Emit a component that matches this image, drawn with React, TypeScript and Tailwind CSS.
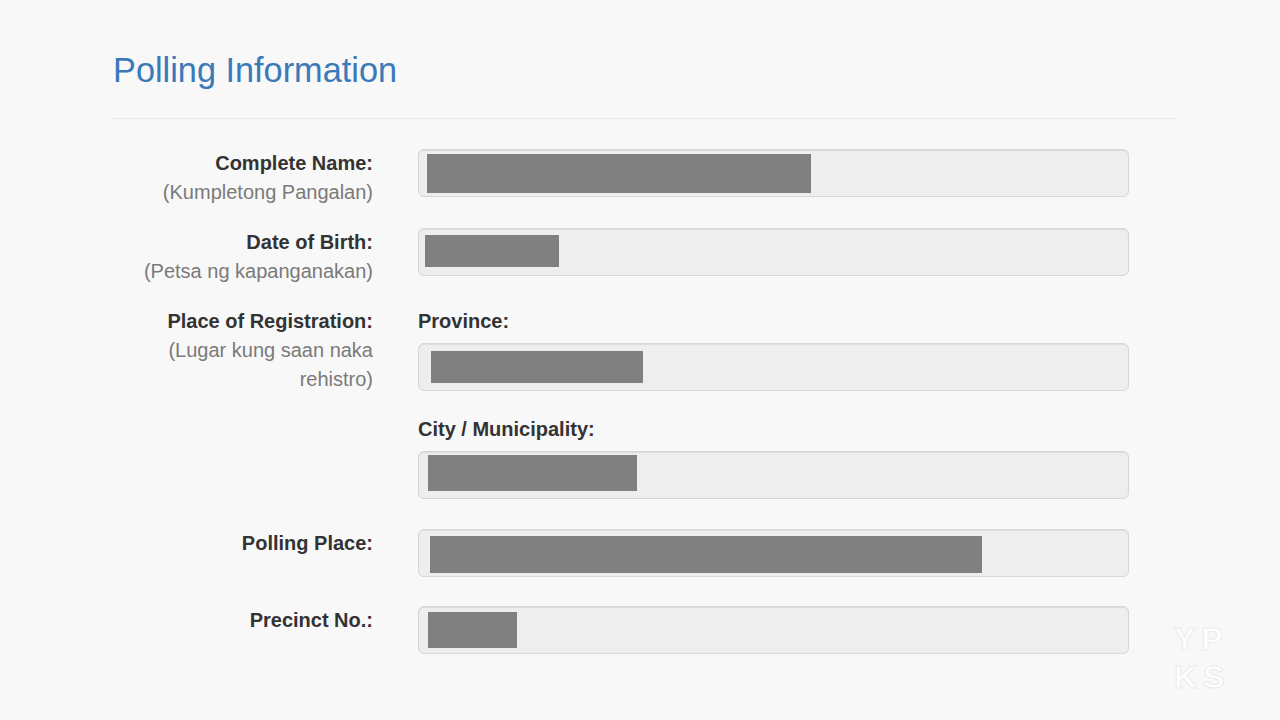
import React from "react";

type Bar = { ml: number; mt: number; w: number; h: number };

function Field({ bar }: { bar: Bar }) {
  return (
    <div className="flex h-[48px] w-[711px] items-start rounded-[6px] border border-[#d6d6d6] bg-[#eeeeee] shadow-[inset_0_1px_1px_rgba(0,0,0,0.075)]">
      <div
        className="bg-[#808080]"
        style={{ marginLeft: bar.ml, marginTop: bar.mt, width: bar.w, height: bar.h }}
      />
    </div>
  );
}

function Label({ title, sub }: { title: string; sub?: string }) {
  return (
    <div className="w-[260px] shrink-0 text-right text-[20px] leading-[29px]">
      <div className="font-bold text-[#333333]">{title}</div>
      {sub && <div className="text-[#7a7a7a]">{sub}</div>}
    </div>
  );
}

export default function App() {
  return (
    <div className="relative h-[720px] w-[1280px] overflow-hidden bg-[#f8f8f8] font-['Liberation_Sans',Arial,sans-serif]">
      <div className="ml-[113px] w-[1062px] pt-[52px]">
        <h3 className="text-[34.3px] leading-[37px] text-[#3a7ab8]">Polling Information</h3>
        <div className="mt-[29px] h-px bg-[#e8e8e8]" />

        <div className="mt-[30px] flex">
          <Label title="Complete Name:" sub="(Kumpletong Pangalan)" />
          <div className="ml-[45px]">
            <Field bar={{ ml: 8, mt: 4, w: 384, h: 39 }} />
          </div>
        </div>

        <div className="mt-[21px] flex">
          <Label title="Date of Birth:" sub="(Petsa ng kapanganakan)" />
          <div className="ml-[45px]">
            <Field bar={{ ml: 6, mt: 6, w: 134, h: 32 }} />
          </div>
        </div>

        <div className="mt-[21px] flex">
          <Label title="Place of Registration:" sub="(Lugar kung saan naka rehistro)" />
          <div className="ml-[45px]">
            <div className="text-[20px] font-bold leading-[29px] text-[#333333]">Province:</div>
            <div className="mt-[7px]">
              <Field bar={{ ml: 12, mt: 7, w: 212, h: 32 }} />
            </div>
            <div className="mt-[24px] text-[20px] font-bold leading-[29px] text-[#333333]">
              City / Municipality:
            </div>
            <div className="mt-[7px]">
              <Field bar={{ ml: 9, mt: 3, w: 209, h: 36 }} />
            </div>
          </div>
        </div>

        <div className="mt-[30px] flex">
          <Label title="Polling Place:" />
          <div className="ml-[45px]">
            <Field bar={{ ml: 11, mt: 6, w: 552, h: 37 }} />
          </div>
        </div>

        <div className="mt-[29px] flex">
          <Label title="Precinct No.:" />
          <div className="ml-[45px]">
            <Field bar={{ ml: 9, mt: 5, w: 89, h: 36 }} />
          </div>
        </div>
      </div>

      {/* faint corner watermark */}
      <div className="absolute left-[1174px] top-[620px] flex flex-col text-[32px] font-bold leading-[38px] tracking-[6px] text-white [-webkit-text-stroke:1px_#ebebeb]">
        <span>YP</span>
        <span>KS</span>
      </div>
    </div>
  );
}
